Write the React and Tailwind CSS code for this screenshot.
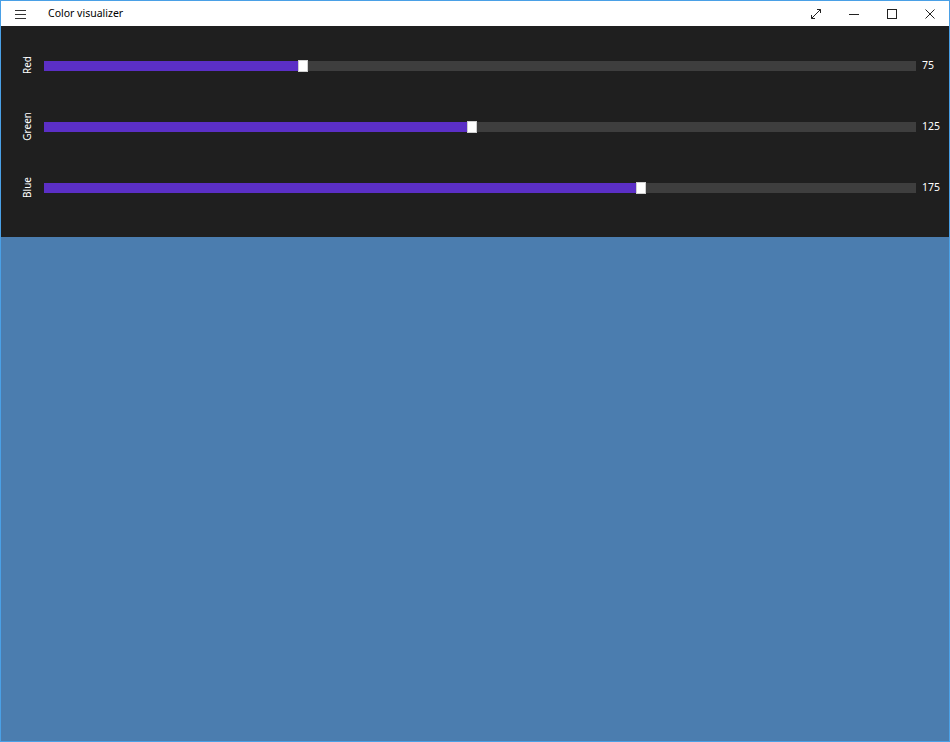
import React from 'react';

const CHANNELS = [
    { name: 'Red', value: 75 },
    { name: 'Green', value: 125 },
    { name: 'Blue', value: 175 },
];

const FONT = "'Noto Sans', 'Open Sans', sans-serif";

function Slider({ value }) {
    const pct = value / 255;
    return (
        <div className="relative flex-1 h-[10px] bg-[#3e3e3e]">
            <div className="absolute left-0 top-0 h-full bg-[#5b2fc6]" style={{ width: `calc((100% - 10px) * ${pct})` }} />
            <div className="absolute top-[-1px] w-[10px] h-[12px] bg-white border border-[#cfcfcf]" style={{ left: `calc((100% - 10px) * ${pct})` }} />
        </div>
    );
}

export default function App() {
    const bg = `rgb(${CHANNELS[0].value}, ${CHANNELS[1].value}, ${CHANNELS[2].value})`;
    return (
        <div className="w-[950px] h-[742px] border border-[#4aa0e6] flex flex-col overflow-hidden" style={{ fontFamily: FONT }}>
            {/* title bar */}
            <div className="h-[25px] bg-white flex items-center shrink-0">
                <div className="w-[47px] pl-[14px]">
                    <svg width="11" height="10" viewBox="0 0 11 10" className="block">
                        <path d="M0 1.5h11M0 5.5h11M0 9.5h11" stroke="#333" strokeWidth="1" />
                    </svg>
                </div>
                <span className="text-[10.5px] text-black">Color visualizer</span>
                <div className="ml-auto flex items-center h-full">
                    <div className="w-[38px] flex justify-center">
                        <svg width="12" height="12" viewBox="0 0 12 12">
                            <path d="M1.5 10.5L10.5 1.5" stroke="#222" strokeWidth="1" />
                            <path d="M7 1.5h3.5V5" stroke="#222" strokeWidth="1" fill="none" />
                            <path d="M1.5 7v3.5H5" stroke="#222" strokeWidth="1" fill="none" />
                        </svg>
                    </div>
                    <div className="w-[38px] flex justify-center">
                        <svg width="12" height="12" viewBox="0 0 12 12">
                            <path d="M1 6.5h10" stroke="#222" strokeWidth="1" />
                        </svg>
                    </div>
                    <div className="w-[38px] flex justify-center">
                        <svg width="12" height="12" viewBox="0 0 12 12">
                            <rect x="1.5" y="1.5" width="9" height="9" stroke="#222" strokeWidth="1" fill="none" />
                        </svg>
                    </div>
                    <div className="w-[38px] flex justify-center">
                        <svg width="12" height="12" viewBox="0 0 12 12">
                            <path d="M1.5 1.5l9 9M10.5 1.5l-9 9" stroke="#222" strokeWidth="1" />
                        </svg>
                    </div>
                </div>
            </div>

            {/* sliders */}
            <div className="h-[211px] bg-[#1f1f1f] pt-[9px] shrink-0">
                {CHANNELS.map(c => (
                    <div key={c.name} className="h-[61px] flex items-center">
                        <div className="w-[43px] flex justify-end pr-[9px]">
                            <span className="text-[10px] text-white leading-[16px] [writing-mode:vertical-rl] rotate-180">{c.name}</span>
                        </div>
                        <Slider value={c.value} />
                        <div className="w-[33px] pl-[6px] text-[10.5px] text-white">{c.value}</div>
                    </div>
                ))}
            </div>

            {/* color preview */}
            <div className="flex-1" style={{ backgroundColor: bg }} />
        </div>
    );
}
